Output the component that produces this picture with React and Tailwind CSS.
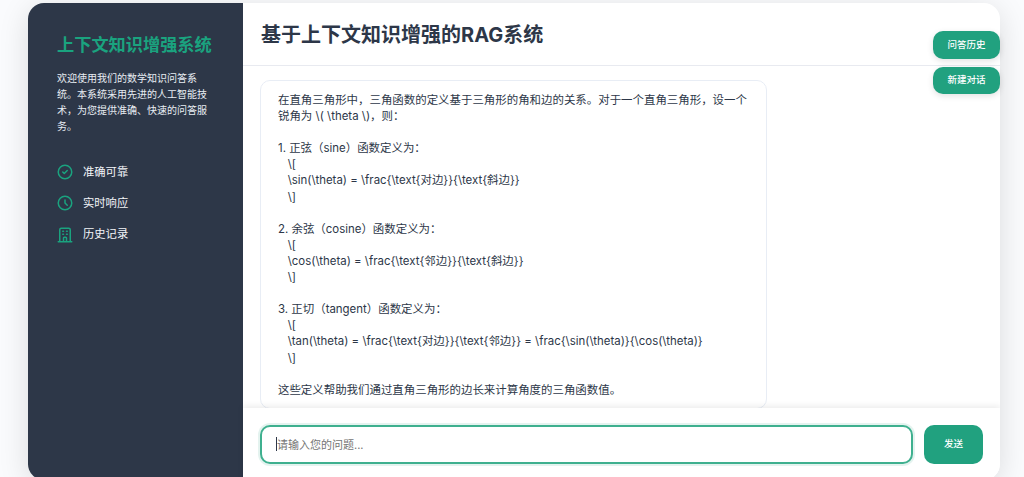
import React from "react";
import { HiOutlineCheckCircle, HiOutlineClock, HiOutlineOfficeBuilding } from "react-icons/hi";

const FONT = "font-['Inter','Noto_Sans_CJK_SC',sans-serif]";

const features = [
  { icon: HiOutlineCheckCircle, label: "准确可靠" },
  { icon: HiOutlineClock, label: "实时响应" },
  { icon: HiOutlineOfficeBuilding, label: "历史记录" },
];

const answer = `在直角三角形中，三角函数的定义基于三角形的角和边的关系。对于一个直角三角形，设一个锐角为 \\( \\theta \\)，则：

1. 正弦（sine）函数定义为：
   \\[
   \\sin(\\theta) = \\frac{\\text{对边}}{\\text{斜边}}
   \\]

2. 余弦（cosine）函数定义为：
   \\[
   \\cos(\\theta) = \\frac{\\text{邻边}}{\\text{斜边}}
   \\]

3. 正切（tangent）函数定义为：
   \\[
   \\tan(\\theta) = \\frac{\\text{对边}}{\\text{邻边}} = \\frac{\\sin(\\theta)}{\\cos(\\theta)}
   \\]

这些定义帮助我们通过直角三角形的边长来计算角度的三角函数值。`;

export default function App() {
  return (
    <div className={`${FONT} relative h-[477px] overflow-hidden bg-[#fafbfd] pt-[3px] pl-[28px] pr-[24px]`}>
      {/* CARD */}
      <div className="flex h-[477px] overflow-hidden rounded-[16px] bg-white shadow-[0_6px_30px_rgba(0,0,0,0.13)]">
        {/* SIDEBAR */}
        <aside className="w-[215px] shrink-0 bg-[#2d3748] px-[29px] pt-[29px]">
          <h1 className="text-[17.2px] leading-[25px] font-bold whitespace-nowrap text-[#1aa37f]">上下文知识增强系统</h1>
          <p className="mt-[13px] text-[10px] leading-[16px] text-[#e8edf3]">
            欢迎使用我们的数学知识问答系统。本系统采用先进的人工智能技术，为您提供准确、快速的问答服务。
          </p>
          <ul className="mt-[29px] flex flex-col gap-[13.4px]">
            {features.map((f) => (
              <li key={f.label} className="flex h-[18px] items-center gap-[9px]">
                <f.icon className="-ml-px h-[18px] w-[18px] shrink-0 text-[#1aa37f]" />
                <span className="text-[11.3px] text-[#f3f5f8]">{f.label}</span>
              </li>
            ))}
          </ul>
        </aside>

        {/* MAIN */}
        <main className="flex min-w-0 flex-1 flex-col">
          <header className="flex h-[63px] shrink-0 items-center border-b border-[#e8eaf0] pt-[2px] pl-[18px]">
            <h2 className="text-[20px] font-bold text-[#2d3748]">基于上下文知识增强的RAG系统</h2>
          </header>

          <div className="min-h-0 flex-1 overflow-hidden pt-[14px] pl-[17px]">
            <div className="w-[507px] rounded-[10px] border border-[#e8edf5] px-[17px] pt-[11px] pb-[10px] text-[11.44px] leading-[16.1px] whitespace-pre-wrap text-[#2d3748]">
              {answer}
            </div>
          </div>

          <div className="relative z-10 flex h-[72px] shrink-0 items-start gap-[11px] bg-white pt-[17px] pl-[17px] pr-[17px] shadow-[0_-2px_6px_rgba(0,0,0,0.08)]">
            <div className="relative h-[39px] w-[653px]">
              <input
                placeholder="请输入您的问题..."
                className="h-full w-full rounded-[10px] border-2 border-[#3fb08f] bg-white px-[15px] text-[11px] text-[#2d3748] shadow-[0_0_0_2px_rgba(31,158,125,0.12)] outline-none placeholder:text-[#757575]"
              />
              {/* caret */}
              <span className="absolute top-[12px] left-[16px] h-[14px] w-px bg-[#2d3748]" />
            </div>
            <button className="h-[39px] w-[59px] rounded-[10px] bg-[#21a17f] text-[9.5px] font-medium text-white">发送</button>
          </div>
        </main>
      </div>

      {/* FLOATING BUTTONS */}
      <div className="absolute top-[31px] right-[24px] flex flex-col gap-[8px]">
        <button className="h-[27.5px] w-[67px] rounded-[10px] bg-[#21a17f] text-[9.5px] font-medium text-white shadow-[0_2px_6px_rgba(0,0,0,0.12)]">问答历史</button>
        <button className="h-[27.5px] w-[67px] rounded-[10px] bg-[#21a17f] text-[9.5px] font-medium text-white shadow-[0_2px_6px_rgba(0,0,0,0.12)]">新建对话</button>
      </div>
    </div>
  );
}
